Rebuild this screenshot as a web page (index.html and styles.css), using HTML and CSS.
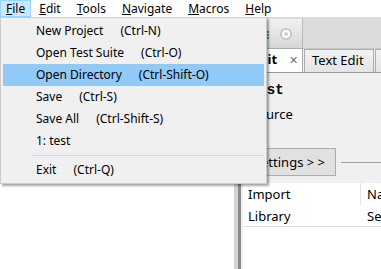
FILE: index.html
```html
<!DOCTYPE html>
<html>
<head>
<meta charset="utf-8">
<title>Test Suite Editor</title>
<link rel="stylesheet" href="styles.css">
</head>
<body>
  <div class="menubar">
    <div class="mitem open"><u>F</u>ile</div>
    <div class="mitem"><u>E</u>dit</div>
    <div class="mitem"><u>T</u>ools</div>
    <div class="mitem"><u>N</u>avigate</div>
    <div class="mitem"><u>M</u>acros</div>
    <div class="mitem"><u>H</u>elp</div>
  </div>

  <div class="workspace">
    <div class="leftpane"></div>
    <div class="splitter"></div>
    <div class="rightpane">
      <div class="doctabs">
        <div class="doctab">
          <svg class="suiteicon" width="12" height="10" viewBox="0 0 12 10">
            <path d="M1 2h10M1 5h10M1 8h10M3 1v8M8 1v8" stroke="#2f7d2f" stroke-width="1.4" fill="none"/>
          </svg>
          <span class="closedot"></span>
        </div>
      </div>
      <div class="edittabs">
        <div class="etab active">Edit <span class="x">&#x2715;</span></div>
        <div class="etab text">Text Edit</div>
        <div class="etab more"></div>
      </div>
      <div class="content">
        <div class="suitename">test</div>
        <div class="source">Source</div>
        <div class="btnrow">
          <button class="settings">Settings &gt; &gt;</button>
          <div class="rule"></div>
        </div>
        <div class="table">
          <div class="trow">
            <div class="cell c1">Import</div>
            <div class="cell c2">Name</div>
          </div>
          <div class="trow last">
            <div class="cell c1">Library</div>
            <div class="cell c2">SeleniumLibrary</div>
          </div>
        </div>
      </div>
    </div>
  </div>

  <div class="dropdown">
    <div class="ditem"><span>New Project</span><span class="key">(Ctrl-N)</span></div>
    <div class="ditem"><span>Open Test Suite</span><span class="key">(Ctrl-O)</span></div>
    <div class="ditem hot"><span>Open Directory</span><span class="key">(Ctrl-Shift-O)</span></div>
    <div class="ditem"><span>Save</span><span class="key">(Ctrl-S)</span></div>
    <div class="ditem"><span>Save All</span><span class="key">(Ctrl-Shift-S)</span></div>
    <div class="ditem"><span>1: test</span></div>
    <div class="sep"></div>
    <div class="ditem"><span>Exit</span><span class="key">(Ctrl-Q)</span></div>
  </div>
</body>
</html>
```

FILE: styles.css
```css
* {
    margin: 0;
    padding: 0;
    box-sizing: border-box;
}
body {
    width: 381px;
    height: 269px;
    overflow: hidden;
    position: relative;
    background: #fff;
    font-family: "Noto Sans", "Liberation Sans", sans-serif;
    font-size: 12px;
    color: #000;
}

/* menu bar */
.menubar {
    height: 17px;
    display: flex;
    background: #fff;
}
.mitem {
    padding: 0 7px;
    line-height: 16px;
    height: 17px;
    border: 1px solid transparent;
}
.mitem.open {
    background: #cce8ff;
    border-color: #99d1ff;
    padding: 0 5px;
}

/* main area */
.workspace {
    display: flex;
    height: 252px;
}
.leftpane {
    width: 234px;
    flex-shrink: 0;
    background: #fff;
}
.splitter {
    width: 9px;
    flex-shrink: 0;
    background: #f0f0f0;
    display: flex;
}
.splitter::before {
    content: "";
    width: 7px;
    background: linear-gradient(90deg, #d4d4d4 0 4px, #8a8a8a 4px 7px);
}
.rightpane {
    flex: 1;
    min-width: 0;
    overflow: hidden;
    display: flex;
    flex-direction: column;
    background: #f0f0f0;
}
.doctabs {
    height: 32px;
    flex-shrink: 0;
    background: #dcdcdc;
    border-bottom: 1px solid #c8c8c8;
    display: flex;
    padding-top: 2px;
}
.doctab {
    width: 60px;
    background: linear-gradient(#f2f2f2, #d6d6d6);
    border-right: 1px solid #b8b8b8;
    display: flex;
    align-items: center;
    padding-left: 15px;
    gap: 10px;
}
.suiteicon {
    margin-top: 2px;
}
.closedot {
    width: 12px;
    height: 12px;
    border-radius: 50%;
    background: #c4c4c4;
    display: flex;
    align-items: center;
    justify-content: center;
}
.closedot::before {
    content: "";
    width: 8px;
    height: 8px;
    border-radius: 50%;
    background: #fff;
    box-shadow: inset 0 0 0 2px #fff, inset 0 0 0 4px #d0d0d0;
}
.edittabs {
    height: 24px;
    flex-shrink: 0;
    display: flex;
    align-items: flex-end;
    border-bottom: 1px solid #9a9a9a;
}
.etab {
    height: 23px;
    line-height: 21px;
    padding: 0 8px;
    font-size: 13px;
    white-space: nowrap;
    flex-shrink: 0;
    border: 1px solid #acacac;
    border-bottom: none;
    background: linear-gradient(#f2f2f2, #e4e4e4);
    margin-left: 1px;
}
.etab.active {
    height: 24px;
    width: 60px;
    margin-left: 0;
    background: #fff;
    font-weight: bold;
    padding-left: 9px;
    border-left: none;
}
.etab .x {
    font-weight: normal;
    color: #6e6e6e;
    font-size: 11px;
    margin-left: 9px;
}
.etab.text {
    width: 70px;
    padding-left: 7px;
}
.etab.more {
    width: 10px;
    padding: 0;
}
.content {
    flex: 1;
    display: flex;
    flex-direction: column;
}
.suitename {
    font-family: "Liberation Mono", monospace;
    font-weight: bold;
    font-size: 14px;
    padding: 9px 0 0 7px;
    line-height: 17px;
}
.source {
    font-size: 13px;
    padding: 7px 0 0 8px;
    line-height: 16px;
}
.btnrow {
    display: flex;
    align-items: center;
    margin-top: 26px;
    gap: 5px;
}
.settings {
    font-family: "Noto Sans", "Liberation Sans", sans-serif;
    font-size: 13px;
    height: 28px;
    width: 93px;
    flex-shrink: 0;
    white-space: nowrap;
    border: 1px solid #adadad;
    background: #e1e1e1;
    text-align: right;
    padding-right: 10px;
}
.rule {
    flex: 1;
    border-top: 1px solid #a0a0a0;
}
.table {
    margin-top: 7px;
    flex: 1;
    background: #fff;
}
.trow {
    display: flex;
    height: 22px;
    font-size: 13px;
    line-height: 22px;
}
.trow.last {
    border-bottom: 1px solid #e2e2e2;
}
.cell {
    padding-left: 5px;
    white-space: nowrap;
    overflow: hidden;
}
.c1 {
    width: 118px;
    flex-shrink: 0;
    border-right: 1px solid #e2e2e2;
}
.trow.last .c1 {
    border-right-color: #fff;
}
.c2 {
    flex: 1;
    padding-left: 6px;
}

/* open File menu */
.dropdown {
    position: absolute;
    top: 17px;
    left: 0;
    width: 267px;
    background: #f0f0f0;
    border: 1px solid #cccccc;
    padding: 2px;
    box-shadow: 2px 2px 2px rgba(0, 0, 0, 0.35);
}
.ditem {
    height: 22px;
    line-height: 22px;
    padding-left: 33px;
    display: flex;
}
.ditem.hot {
    background: #91c9f7;
}
.key {
    margin-left: 17px;
}
.sep {
    height: 7px;
    margin-left: 28px;
    background: linear-gradient(transparent 3px, #d7d7d7 3px 4px, transparent 4px);
}
```
